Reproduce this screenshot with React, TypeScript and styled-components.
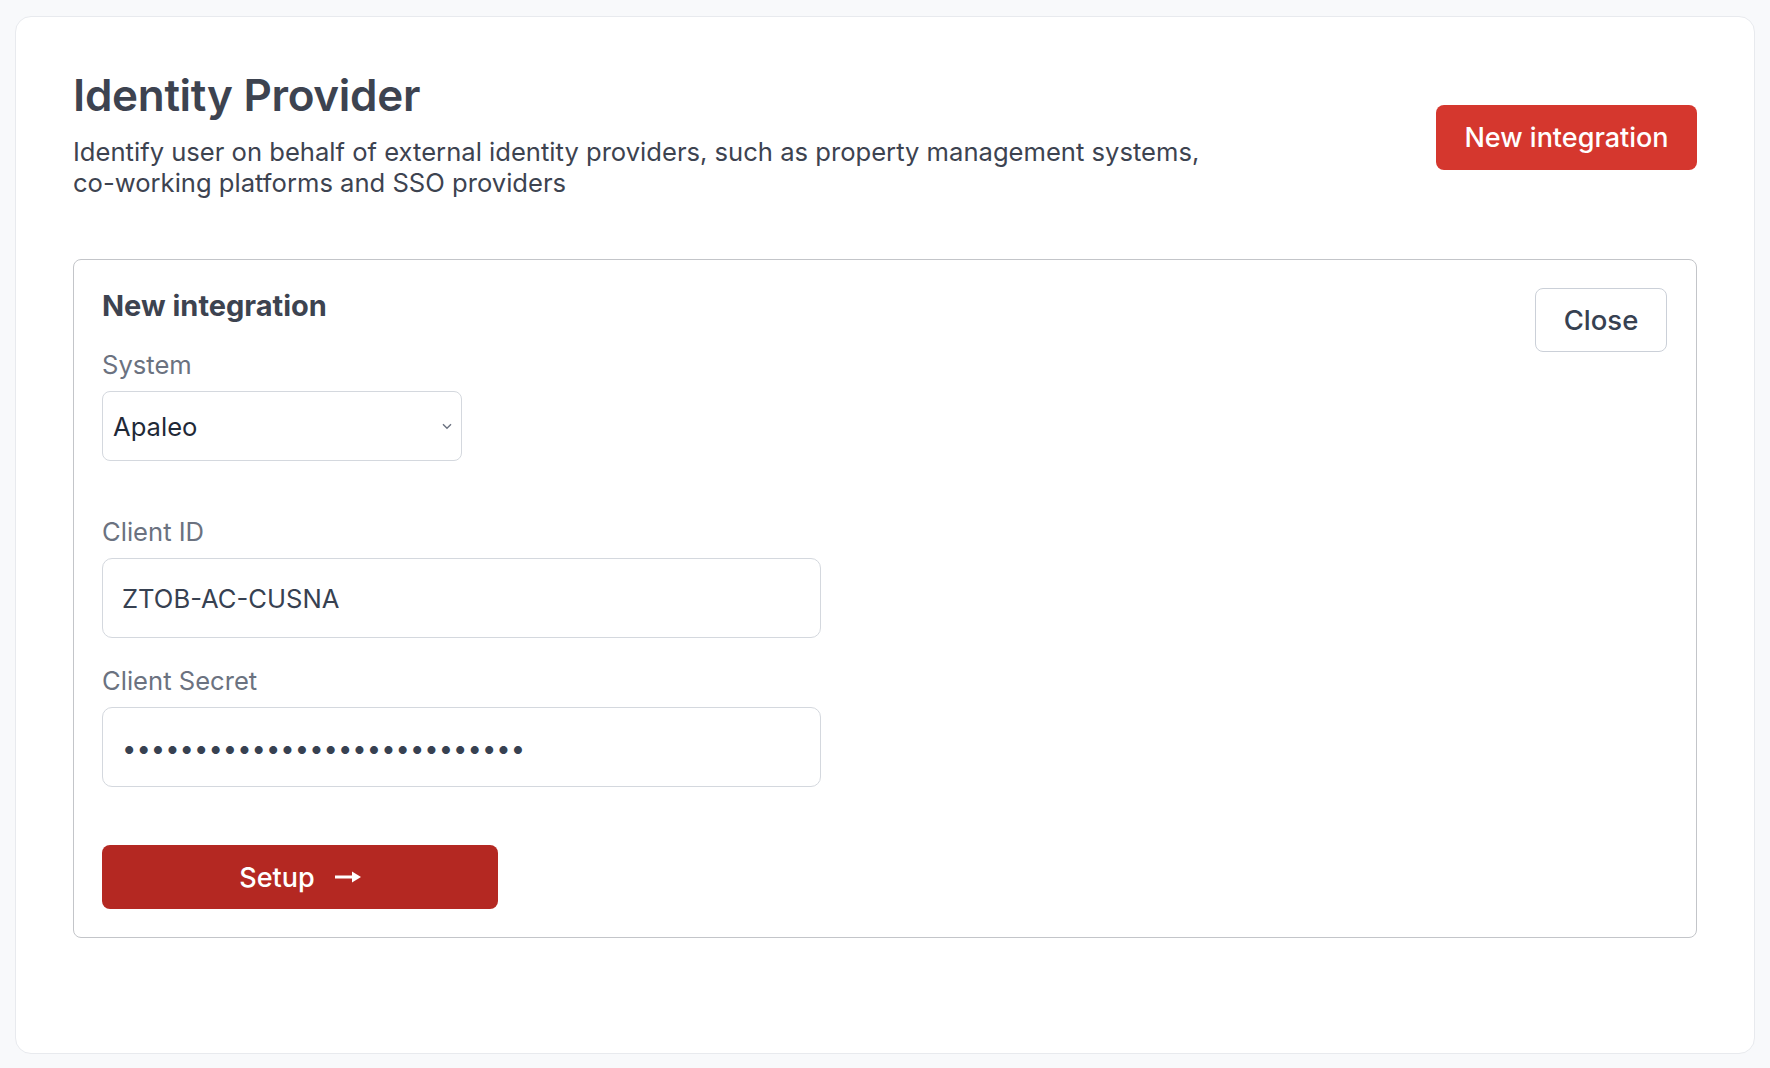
import { useState } from 'react'
import styled, { createGlobalStyle } from 'styled-components'

const GlobalStyle = createGlobalStyle`
  * {
    box-sizing: border-box;
  }

  body {
    margin: 0;
    background: #f8f9fb;
    font-family: Inter, 'Noto Sans', sans-serif;
    color: #374151;
  }
`

const Page = styled.div`
  padding: 16px 15px 14px;
  min-height: 1068px;
  display: flex;
`

const Card = styled.section`
  flex: 1;
  background: #ffffff;
  border: 1px solid #e8eaee;
  border-radius: 16px;
  padding: 52px 57px 57px;
`

const Header = styled.header`
  display: flex;
  align-items: flex-start;
  justify-content: space-between;
  gap: 80px;
`

const Intro = styled.div`
  max-width: 1140px;
`

const Title = styled.h1`
  margin: 0 0 14px;
  font-size: 44px;
  line-height: 53px;
  font-weight: 600;
  color: #3d4350;
  letter-spacing: -0.3px;
`

const Description = styled.p`
  margin: 0;
  font-size: 25.6px;
  line-height: 31px;
  color: #3d4350;
`

const Button = styled.button<{ $variant: 'primary' | 'danger' | 'outline' }>`
  display: inline-flex;
  align-items: center;
  justify-content: center;
  gap: 20px;
  border-radius: 8px;
  font-family: inherit;
  font-size: 27px;
  font-weight: 500;
  cursor: pointer;
  border: 1px solid
    ${({ $variant }) =>
      $variant === 'outline' ? '#cbd0d8' : 'transparent'};
  background: ${({ $variant }) =>
    $variant === 'primary'
      ? '#d5372e'
      : $variant === 'danger'
        ? '#b42822'
        : '#ffffff'};
  color: ${({ $variant }) => ($variant === 'outline' ? '#374151' : '#ffffff')};
`

const NewButton = styled(Button)`
  margin-top: 36px;
  width: 261px;
  height: 65px;
  flex-shrink: 0;
`

const Panel = styled.div`
  margin-top: 61px;
  border: 1px solid #c3c5c9;
  border-radius: 8px;
  padding: 28px 29px 28px 28px;
`

const PanelHeader = styled.div`
  display: flex;
  align-items: flex-start;
  justify-content: space-between;
`

const PanelTitle = styled.h2`
  margin: 0;
  font-size: 29px;
  line-height: 35px;
  font-weight: 700;
  color: #3d4350;
`

const CloseButton = styled(Button)`
  width: 132px;
  height: 64px;
  font-size: 27.5px;
`

const Field = styled.div<{ $gap: number }>`
  display: flex;
  flex-direction: column;
  margin-top: ${({ $gap }) => $gap}px;
`

const Label = styled.label`
  font-size: 25.6px;
  line-height: 30px;
  color: #6b7280;
  margin-bottom: 11px;
`

const SelectWrap = styled.div`
  position: relative;
  width: 360px;
`

const Select = styled.select`
  width: 100%;
  height: 70px;
  appearance: none;
  border: 1px solid #d4d8de;
  border-radius: 8px;
  background: #ffffff;
  padding: 0 30px 0 10px;
  font-family: inherit;
  font-size: 25.6px;
  color: #1f2937;
`

const Chevron = styled.svg`
  position: absolute;
  right: 10px;
  top: 32px;
  pointer-events: none;
`

const Input = styled.input`
  width: 719px;
  height: 80px;
  border: 1px solid #d4d8de;
  border-radius: 10px;
  background: #ffffff;
  padding: 0 19px;
  font-family: inherit;
  font-size: 25.6px;
  color: #374151;
  outline: none;
`

const SetupButton = styled(Button)`
  margin-top: 58px;
  width: 396px;
  height: 64px;
`

const ArrowIcon = () => (
  <svg width="26" height="12" viewBox="0 0 26 12" aria-hidden="true">
    <rect x="0" y="4.5" width="19" height="3" fill="currentColor" />
    <polygon points="17,0.5 26,6 17,11.5" fill="currentColor" />
  </svg>
)

export default function App() {
  const [system, setSystem] = useState('apaleo')
  const [clientId, setClientId] = useState('ZTOB-AC-CUSNA')
  const [secret, setSecret] = useState('x'.repeat(28))

  return (
    <>
      <GlobalStyle />
      <Page>
        <Card>
          <Header>
            <Intro>
              <Title>Identity Provider</Title>
              <Description>
                Identify user on behalf of external identity providers, such as
                property management systems, co-working platforms and SSO
                providers
              </Description>
            </Intro>
            <NewButton $variant="primary">New integration</NewButton>
          </Header>

          <Panel>
            <PanelHeader>
              <PanelTitle>New integration</PanelTitle>
              <CloseButton $variant="outline">Close</CloseButton>
            </PanelHeader>

            <Field $gap={-2}>
              <Label htmlFor="system">System</Label>
              <SelectWrap>
                <Select
                  id="system"
                  value={system}
                  onChange={(e) => setSystem(e.target.value)}
                >
                  <option value="apaleo">Apaleo</option>
                  <option value="mews">Mews</option>
                </Select>
                <Chevron width="10" height="7" viewBox="0 0 10 7">
                  <path
                    d="M1 1.2 5 5.2 9 1.2"
                    fill="none"
                    stroke="#6b7280"
                    strokeWidth="1.4"
                  />
                </Chevron>
              </SelectWrap>
            </Field>

            <Field $gap={56}>
              <Label htmlFor="client-id">Client ID</Label>
              <Input
                id="client-id"
                value={clientId}
                onChange={(e) => setClientId(e.target.value)}
              />
            </Field>

            <Field $gap={28}>
              <Label htmlFor="client-secret">Client Secret</Label>
              <Input
                id="client-secret"
                type="password"
                value={secret}
                onChange={(e) => setSecret(e.target.value)}
              />
            </Field>

            <SetupButton $variant="danger">
              Setup
              <ArrowIcon />
            </SetupButton>
          </Panel>
        </Card>
      </Page>
    </>
  )
}
